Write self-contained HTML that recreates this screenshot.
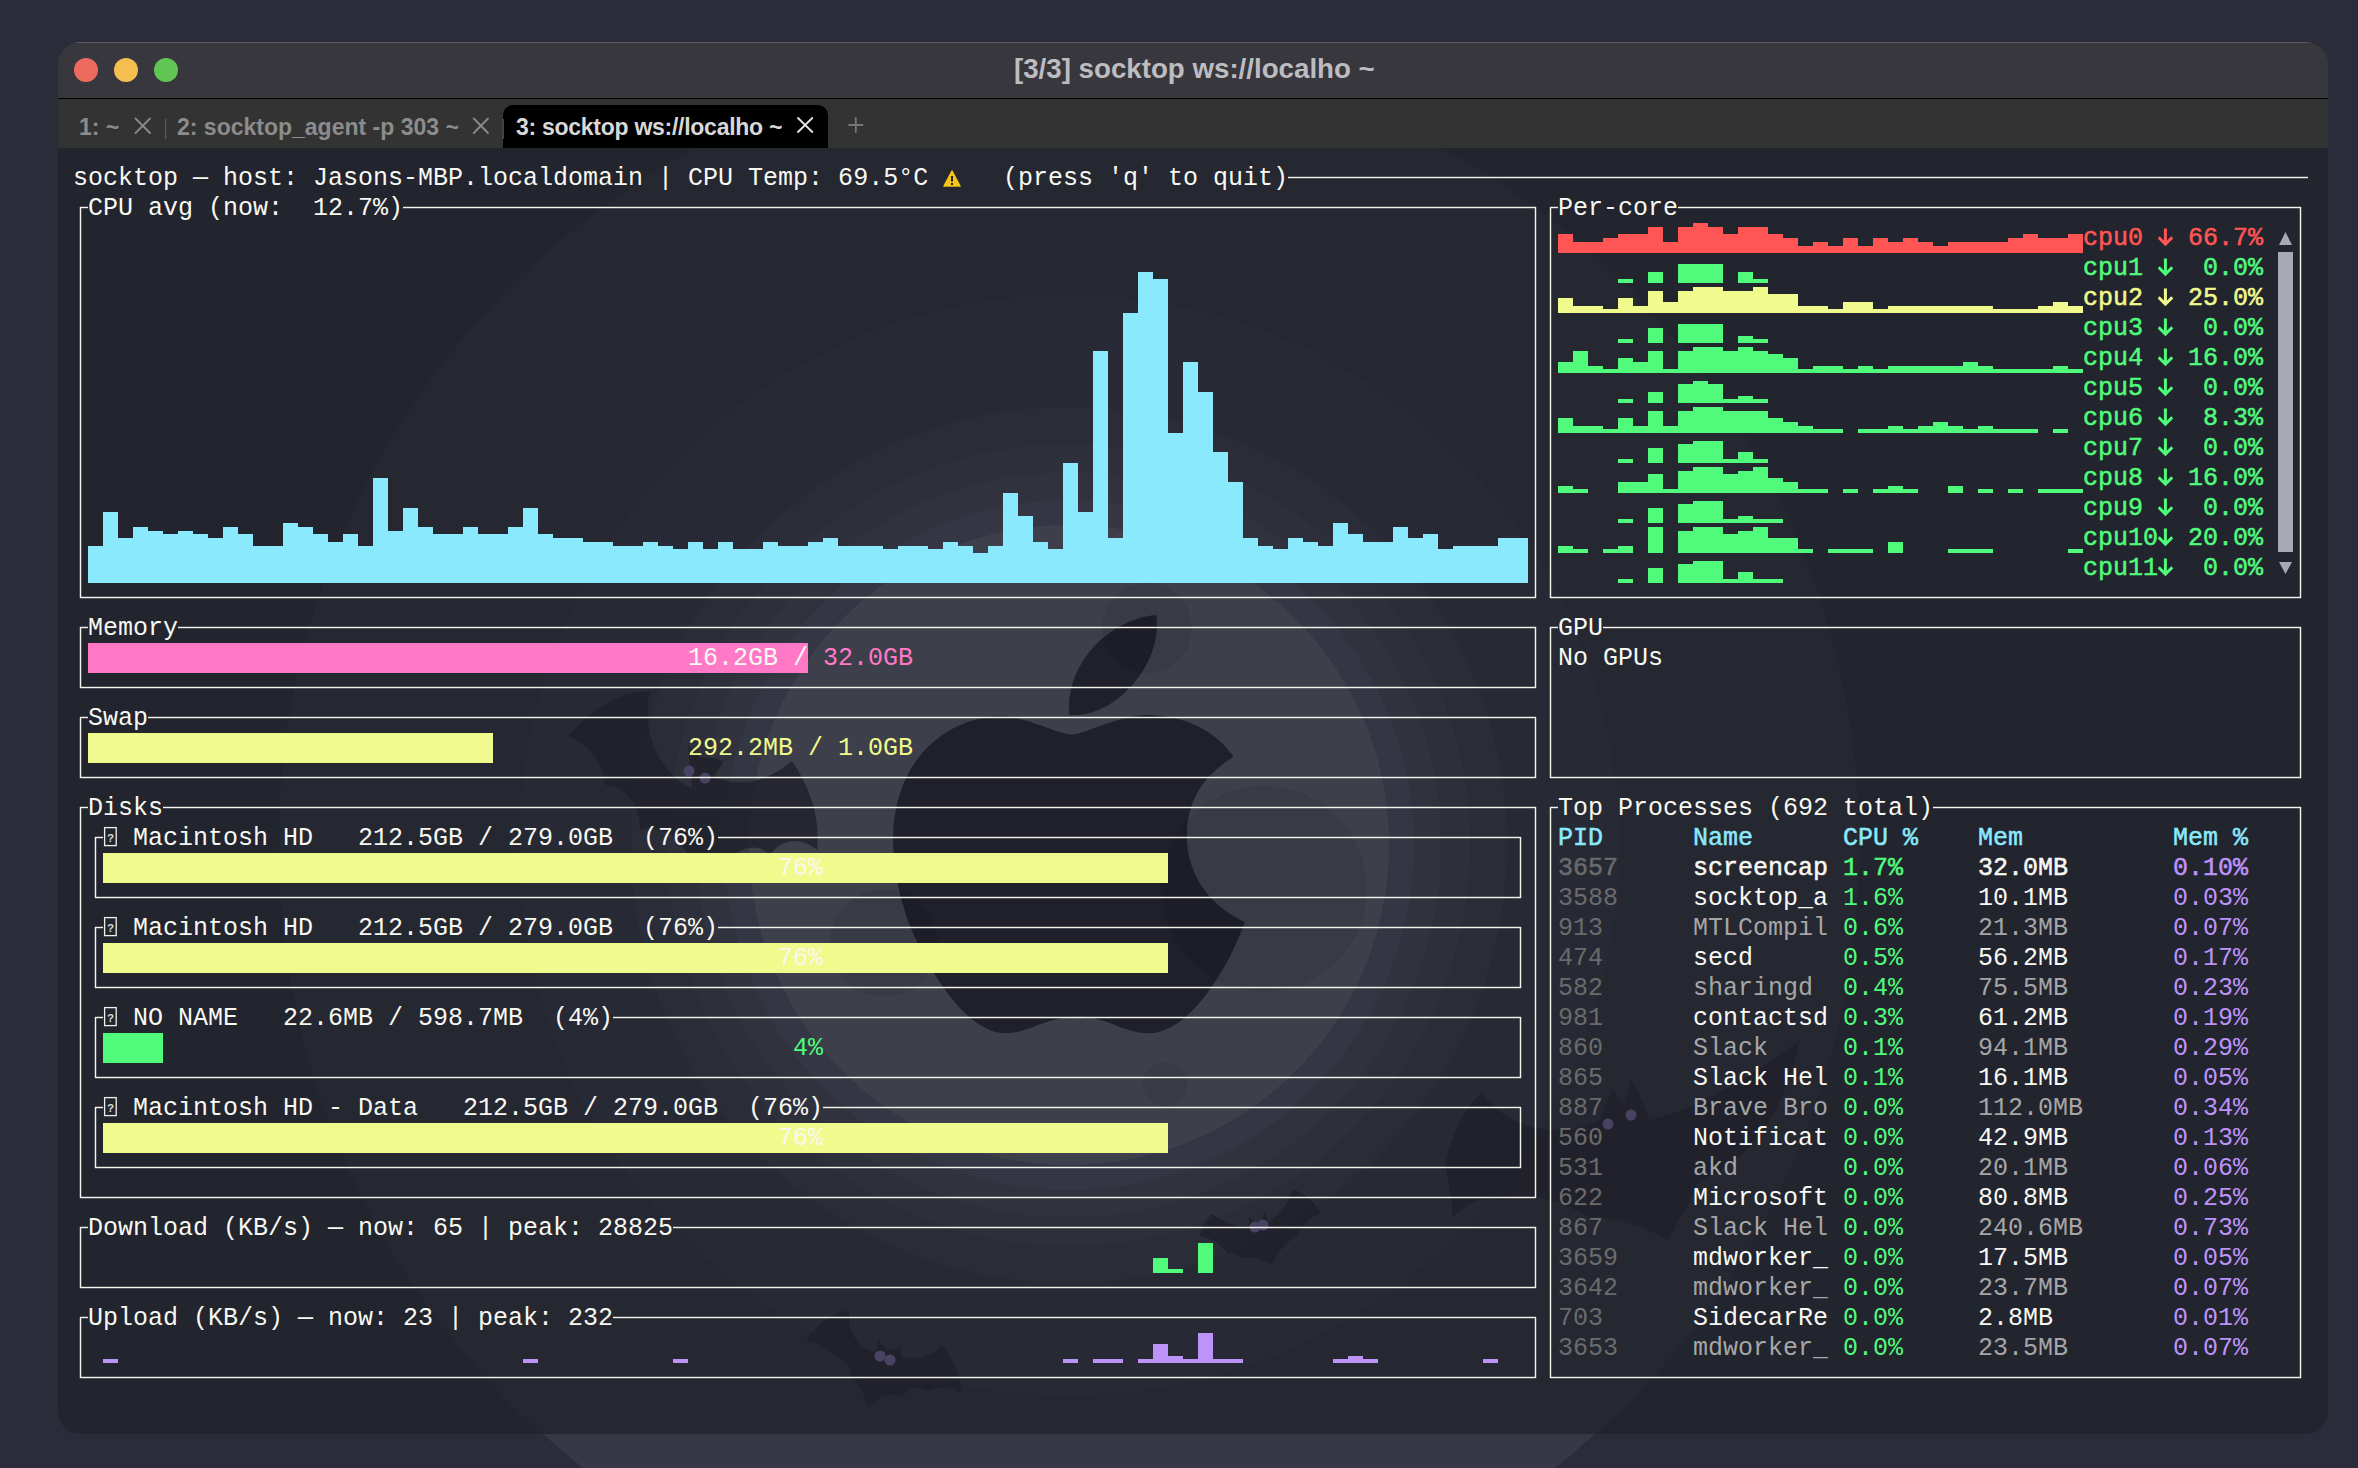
<!DOCTYPE html>
<html><head><meta charset="utf-8">
<style>
html,body{margin:0;padding:0;}
body{width:2358px;height:1468px;position:relative;overflow:hidden;background:#2a2d39;font-family:"Liberation Mono",monospace;}
.wp{position:absolute;left:0;top:0;width:2358px;height:1468px;background:#2a2c39;}
.wpring{position:absolute;left:279px;top:55px;width:1580px;height:1580px;border-radius:50%;background:#363846;}
.win{position:absolute;left:58px;top:42px;width:2270px;height:1392px;border-radius:22px;overflow:hidden;}
.tb{position:absolute;left:0;top:0;width:2270px;height:56px;background:rgba(56,56,61,0.97);border-top:1px solid #5a5a5f;box-sizing:border-box;}
.tbl{position:absolute;left:0;top:56px;width:2270px;height:2px;background:#000;}
.tabs{position:absolute;left:0;top:57px;width:2270px;height:49px;background:#333334;}
.term{position:absolute;left:0;top:106px;width:2270px;height:1286px;background:radial-gradient(circle at 1011px 697px,#3d3f4b 0,#3d3f4b 320px,#343643 320px,#343643 345px,#30323e 345px,#30323e 372px,#2d2f3b 372px,#2d2f3b 401px,#2a2c38 401px,#2a2c38 438px,#272934 438px,#272934 550px,#252731 550px,#252731 790px,#22242e 790px);}
.dot{position:absolute;width:24px;height:24px;border-radius:50%;top:16px;}
.ttl{position:absolute;font-family:"Liberation Sans",sans-serif;font-weight:bold;font-size:27.7px;color:#bdbdc1;white-space:nowrap;}
.tab{position:absolute;font-family:"Liberation Sans",sans-serif;font-weight:bold;font-size:23px;white-space:nowrap;}
.bars{position:absolute;left:0;top:0;shape-rendering:crispEdges;}
.ln{position:absolute;background:#f4f4ee;}
.lh{height:1px;box-shadow:0 1px 0 rgba(244,244,238,0.22),0 -1px 0 rgba(244,244,238,0.22);}
.lv{width:1px;box-shadow:1px 0 0 rgba(244,244,238,0.22),-1px 0 0 rgba(244,244,238,0.22);}
.t{position:absolute;font-size:25px;line-height:30px;height:30px;white-space:pre;transform:translateY(1.6px);}
.b{-webkit-text-stroke:0.5px currentColor;}
</style></head><body>
<div class="wp"></div>
<div class="wpring"></div>
<div class="win">
  <div class="tb"></div>
  <div class="dot" style="left:16px;background:#ed6a5e"></div>
  <div class="dot" style="left:56px;background:#f4bf4f"></div>
  <div class="dot" style="left:96px;background:#61c554"></div>
  <div class="tbl"></div>
  <div class="tabs"></div>
  <div class="term"><svg width="2270" height="1285" style="position:absolute;left:0;top:0"><path d="M318.7 268.7c-.2-36.7 16.4-64.4 50-84.8-18.8-26.9-47.2-41.7-84.7-44.6-35.5-2.8-74.3 20.7-88.5 20.7-15 0-49.4-19.7-76.4-19.7C63.3 141.2 4 184.8 4 273.5q0 39.3 14.4 81.2c12.8 36.7 59 126.7 107.2 125.2 25.2-.6 43-17.9 75.8-17.9 31.8 0 48.3 17.9 76.4 17.9 48.6-.7 90.4-82.5 102.6-119.3-65.2-30.7-61.7-90-61.7-91.9zm-56.6-164.2c27.3-32.4 24.8-61.9 24-72.5-24.1 1.4-52 16.4-67.9 34.9-17.5 19.8-27.8 44.3-25.6 71.9 26.1 2 49.9-11.4 69.5-34.3z" fill="#1f2029" transform="translate(831.3,437.1) scale(0.934)"/><g transform="translate(-58,-148)"><circle cx="1147" cy="628" r="45" fill="#000" opacity="0.07"/><circle cx="1264" cy="889" r="103" fill="#000" opacity="0.07"/><circle cx="884" cy="943" r="54" fill="#000" opacity="0.07"/><circle cx="1165" cy="1084" r="22" fill="#000" opacity="0.07"/><path d="M 568 736 C 600 700 630 690 650 692 C 640 730 660 775 692 788 L 688 745 L 700 757 L 712 758 L 724 761 L 714 776 C 740 790 770 780 792 761 C 812 790 820 820 817 850 C 800 835 780 840 770 855 C 755 840 735 850 725 865 C 715 850 700 850 690 860 C 680 835 660 825 640 830 C 640 805 625 785 605 785 C 605 765 590 745 568 736 Z" fill="#1f2029" opacity="0.8"/><path d="M 806 1342 C 820 1318 840 1310 850 1311 C 845 1330 860 1350 876 1352 L 879 1340 L 886 1349 L 896 1350 L 901 1346 L 901 1356 C 915 1362 935 1356 941 1344 C 955 1360 962 1380 961 1394 C 950 1386 935 1386 928 1391 C 918 1385 908 1388 903 1396 C 890 1392 875 1398 867 1409 C 865 1395 860 1385 852 1378 C 850 1365 840 1355 834 1355 C 828 1346 815 1342 806 1342 Z" fill="#1f2029" opacity="0.8"/><path d="M 1200 1236 C 1203 1225 1208 1216 1213 1214 C 1222 1222 1238 1228 1249 1226 L 1249 1217 L 1256 1223 L 1262 1221 L 1265 1211 L 1268 1222 C 1280 1215 1290 1200 1292 1189 C 1305 1193 1315 1203 1321 1213 C 1308 1218 1300 1228 1296 1238 C 1288 1240 1278 1250 1272 1266 C 1262 1258 1250 1256 1240 1258 C 1235 1252 1232 1250 1228 1254 C 1222 1245 1212 1238 1200 1236 Z" fill="#1f2029" opacity="0.8"/><path d="M 1445 1164 C 1455 1125 1470 1100 1482 1094 C 1510 1130 1560 1140 1600 1120 L 1612 1090 L 1625 1105 L 1631 1078 C 1640 1095 1645 1110 1650 1120 C 1700 1110 1760 1070 1800 1040 C 1790 1090 1760 1160 1700 1180 C 1690 1200 1680 1220 1668 1239 C 1640 1225 1610 1215 1590 1218 C 1560 1200 1530 1190 1500 1200 C 1480 1195 1465 1205 1453 1217 C 1452 1200 1448 1180 1445 1164 Z" fill="#1f2029" opacity="0.8"/></g><circle cx="631" cy="623" r="5.5" fill="#4a4263"/><circle cx="647" cy="630" r="5.5" fill="#4a4263"/><circle cx="1550" cy="976" r="5.5" fill="#4a4263"/><circle cx="1573" cy="967" r="5.5" fill="#4a4263"/><circle cx="1197" cy="1079" r="5.5" fill="#4a4263"/><circle cx="1205" cy="1077" r="5.5" fill="#4a4263"/><circle cx="822" cy="1208" r="5.5" fill="#4a4263"/><circle cx="832" cy="1212" r="5.5" fill="#4a4263"/></svg></div>
</div>
<div class="ttl" style="left:1014px;top:52.7px">[3/3] socktop ws://localho ~</div>
<div style="position:absolute;left:503px;top:105px;width:325px;height:43px;background:#000;border-radius:10px 10px 0 0"></div>
<div class="tab" style="left:79px;top:113.5px;color:#8c8c8c">1: ~</div>
<div class="tab" style="left:177px;top:113.5px;color:#8c8c8c">2: socktop_agent -p 303 ~</div>
<div class="tab" style="left:516px;top:113.5px;color:#d8d8d8;letter-spacing:-0.27px">3: socktop ws://localho ~</div>
<svg style="position:absolute;left:0;top:0" width="900" height="150">
<g stroke-width="1.8" stroke-linecap="round">
<path d="M135.5 118.5 L150 133 M150 118.5 L135.5 133" stroke="#8a8a8a"/>
<path d="M473.8 118.5 L488 133 M488 118.5 L473.8 133" stroke="#8a8a8a"/>
<path d="M798 118 L812.3 132 M812.3 118 L798 132" stroke="#e6e6e6"/>
<path d="M849 125 L862.5 125 M855.8 118 L855.8 132" stroke="#777"/>
</g>
<rect x="165" y="119" width="1.2" height="20" fill="#5c5c5c"/>
<rect x="502.5" y="119" width="1.2" height="20" fill="#5c5c5c"/>
</svg>
<svg class="bars" width="2358" height="1468"><rect x="88" y="545.50" width="15" height="37.50" fill="#8be9fd"/><rect x="103" y="511.75" width="15" height="71.25" fill="#8be9fd"/><rect x="118" y="538.00" width="15" height="45.00" fill="#8be9fd"/><rect x="133" y="526.75" width="15" height="56.25" fill="#8be9fd"/><rect x="148" y="530.50" width="15" height="52.50" fill="#8be9fd"/><rect x="163" y="534.25" width="15" height="48.75" fill="#8be9fd"/><rect x="178" y="530.50" width="15" height="52.50" fill="#8be9fd"/><rect x="193" y="534.25" width="15" height="48.75" fill="#8be9fd"/><rect x="208" y="538.00" width="15" height="45.00" fill="#8be9fd"/><rect x="223" y="526.75" width="15" height="56.25" fill="#8be9fd"/><rect x="238" y="534.25" width="15" height="48.75" fill="#8be9fd"/><rect x="253" y="545.50" width="15" height="37.50" fill="#8be9fd"/><rect x="268" y="545.50" width="15" height="37.50" fill="#8be9fd"/><rect x="283" y="523.00" width="15" height="60.00" fill="#8be9fd"/><rect x="298" y="526.75" width="15" height="56.25" fill="#8be9fd"/><rect x="313" y="534.25" width="15" height="48.75" fill="#8be9fd"/><rect x="328" y="541.75" width="15" height="41.25" fill="#8be9fd"/><rect x="343" y="534.25" width="15" height="48.75" fill="#8be9fd"/><rect x="358" y="545.50" width="15" height="37.50" fill="#8be9fd"/><rect x="373" y="478.00" width="15" height="105.00" fill="#8be9fd"/><rect x="388" y="530.50" width="15" height="52.50" fill="#8be9fd"/><rect x="403" y="508.00" width="15" height="75.00" fill="#8be9fd"/><rect x="418" y="526.75" width="15" height="56.25" fill="#8be9fd"/><rect x="433" y="534.25" width="15" height="48.75" fill="#8be9fd"/><rect x="448" y="534.25" width="15" height="48.75" fill="#8be9fd"/><rect x="463" y="526.75" width="15" height="56.25" fill="#8be9fd"/><rect x="478" y="534.25" width="15" height="48.75" fill="#8be9fd"/><rect x="493" y="534.25" width="15" height="48.75" fill="#8be9fd"/><rect x="508" y="526.75" width="15" height="56.25" fill="#8be9fd"/><rect x="523" y="508.00" width="15" height="75.00" fill="#8be9fd"/><rect x="538" y="534.25" width="15" height="48.75" fill="#8be9fd"/><rect x="553" y="538.00" width="15" height="45.00" fill="#8be9fd"/><rect x="568" y="538.00" width="15" height="45.00" fill="#8be9fd"/><rect x="583" y="541.75" width="15" height="41.25" fill="#8be9fd"/><rect x="598" y="541.75" width="15" height="41.25" fill="#8be9fd"/><rect x="613" y="545.50" width="15" height="37.50" fill="#8be9fd"/><rect x="628" y="545.50" width="15" height="37.50" fill="#8be9fd"/><rect x="643" y="541.75" width="15" height="41.25" fill="#8be9fd"/><rect x="658" y="545.50" width="15" height="37.50" fill="#8be9fd"/><rect x="673" y="549.25" width="15" height="33.75" fill="#8be9fd"/><rect x="688" y="541.75" width="15" height="41.25" fill="#8be9fd"/><rect x="703" y="549.25" width="15" height="33.75" fill="#8be9fd"/><rect x="718" y="541.75" width="15" height="41.25" fill="#8be9fd"/><rect x="733" y="549.25" width="15" height="33.75" fill="#8be9fd"/><rect x="748" y="549.25" width="15" height="33.75" fill="#8be9fd"/><rect x="763" y="541.75" width="15" height="41.25" fill="#8be9fd"/><rect x="778" y="545.50" width="15" height="37.50" fill="#8be9fd"/><rect x="793" y="545.50" width="15" height="37.50" fill="#8be9fd"/><rect x="808" y="541.75" width="15" height="41.25" fill="#8be9fd"/><rect x="823" y="538.00" width="15" height="45.00" fill="#8be9fd"/><rect x="838" y="545.50" width="15" height="37.50" fill="#8be9fd"/><rect x="853" y="545.50" width="15" height="37.50" fill="#8be9fd"/><rect x="868" y="545.50" width="15" height="37.50" fill="#8be9fd"/><rect x="883" y="549.25" width="15" height="33.75" fill="#8be9fd"/><rect x="898" y="545.50" width="15" height="37.50" fill="#8be9fd"/><rect x="913" y="545.50" width="15" height="37.50" fill="#8be9fd"/><rect x="928" y="549.25" width="15" height="33.75" fill="#8be9fd"/><rect x="943" y="541.75" width="15" height="41.25" fill="#8be9fd"/><rect x="958" y="545.50" width="15" height="37.50" fill="#8be9fd"/><rect x="973" y="553.00" width="15" height="30.00" fill="#8be9fd"/><rect x="988" y="545.50" width="15" height="37.50" fill="#8be9fd"/><rect x="1003" y="493.00" width="15" height="90.00" fill="#8be9fd"/><rect x="1018" y="515.50" width="15" height="67.50" fill="#8be9fd"/><rect x="1033" y="541.75" width="15" height="41.25" fill="#8be9fd"/><rect x="1048" y="549.25" width="15" height="33.75" fill="#8be9fd"/><rect x="1063" y="463.00" width="15" height="120.00" fill="#8be9fd"/><rect x="1078" y="511.75" width="15" height="71.25" fill="#8be9fd"/><rect x="1093" y="350.50" width="15" height="232.50" fill="#8be9fd"/><rect x="1108" y="538.00" width="15" height="45.00" fill="#8be9fd"/><rect x="1123" y="313.00" width="15" height="270.00" fill="#8be9fd"/><rect x="1138" y="271.75" width="15" height="311.25" fill="#8be9fd"/><rect x="1153" y="279.25" width="15" height="303.75" fill="#8be9fd"/><rect x="1168" y="433.00" width="15" height="150.00" fill="#8be9fd"/><rect x="1183" y="361.75" width="15" height="221.25" fill="#8be9fd"/><rect x="1198" y="391.75" width="15" height="191.25" fill="#8be9fd"/><rect x="1213" y="451.75" width="15" height="131.25" fill="#8be9fd"/><rect x="1228" y="481.75" width="15" height="101.25" fill="#8be9fd"/><rect x="1243" y="538.00" width="15" height="45.00" fill="#8be9fd"/><rect x="1258" y="545.50" width="15" height="37.50" fill="#8be9fd"/><rect x="1273" y="549.25" width="15" height="33.75" fill="#8be9fd"/><rect x="1288" y="538.00" width="15" height="45.00" fill="#8be9fd"/><rect x="1303" y="541.75" width="15" height="41.25" fill="#8be9fd"/><rect x="1318" y="545.50" width="15" height="37.50" fill="#8be9fd"/><rect x="1333" y="523.00" width="15" height="60.00" fill="#8be9fd"/><rect x="1348" y="534.25" width="15" height="48.75" fill="#8be9fd"/><rect x="1363" y="541.75" width="15" height="41.25" fill="#8be9fd"/><rect x="1378" y="541.75" width="15" height="41.25" fill="#8be9fd"/><rect x="1393" y="526.75" width="15" height="56.25" fill="#8be9fd"/><rect x="1408" y="538.00" width="15" height="45.00" fill="#8be9fd"/><rect x="1423" y="534.25" width="15" height="48.75" fill="#8be9fd"/><rect x="1438" y="549.25" width="15" height="33.75" fill="#8be9fd"/><rect x="1453" y="545.50" width="15" height="37.50" fill="#8be9fd"/><rect x="1468" y="545.50" width="15" height="37.50" fill="#8be9fd"/><rect x="1483" y="545.50" width="15" height="37.50" fill="#8be9fd"/><rect x="1498" y="538.00" width="15" height="45.00" fill="#8be9fd"/><rect x="1513" y="538.00" width="15" height="45.00" fill="#8be9fd"/><rect x="1558" y="234.25" width="15" height="18.75" fill="#ff5555"/><rect x="1573" y="241.75" width="15" height="11.25" fill="#ff5555"/><rect x="1588" y="241.75" width="15" height="11.25" fill="#ff5555"/><rect x="1603" y="238.00" width="15" height="15.00" fill="#ff5555"/><rect x="1618" y="234.25" width="15" height="18.75" fill="#ff5555"/><rect x="1633" y="234.25" width="15" height="18.75" fill="#ff5555"/><rect x="1648" y="226.75" width="15" height="26.25" fill="#ff5555"/><rect x="1663" y="241.75" width="15" height="11.25" fill="#ff5555"/><rect x="1678" y="226.75" width="15" height="26.25" fill="#ff5555"/><rect x="1693" y="223.00" width="15" height="30.00" fill="#ff5555"/><rect x="1708" y="226.75" width="15" height="26.25" fill="#ff5555"/><rect x="1723" y="234.25" width="15" height="18.75" fill="#ff5555"/><rect x="1738" y="226.75" width="15" height="26.25" fill="#ff5555"/><rect x="1753" y="226.75" width="15" height="26.25" fill="#ff5555"/><rect x="1768" y="234.25" width="15" height="18.75" fill="#ff5555"/><rect x="1783" y="238.00" width="15" height="15.00" fill="#ff5555"/><rect x="1798" y="245.50" width="15" height="7.50" fill="#ff5555"/><rect x="1813" y="241.75" width="15" height="11.25" fill="#ff5555"/><rect x="1828" y="245.50" width="15" height="7.50" fill="#ff5555"/><rect x="1843" y="238.00" width="15" height="15.00" fill="#ff5555"/><rect x="1858" y="245.50" width="15" height="7.50" fill="#ff5555"/><rect x="1873" y="238.00" width="15" height="15.00" fill="#ff5555"/><rect x="1888" y="241.75" width="15" height="11.25" fill="#ff5555"/><rect x="1903" y="238.00" width="15" height="15.00" fill="#ff5555"/><rect x="1918" y="241.75" width="15" height="11.25" fill="#ff5555"/><rect x="1933" y="245.50" width="15" height="7.50" fill="#ff5555"/><rect x="1948" y="241.75" width="15" height="11.25" fill="#ff5555"/><rect x="1963" y="241.75" width="15" height="11.25" fill="#ff5555"/><rect x="1978" y="241.75" width="15" height="11.25" fill="#ff5555"/><rect x="1993" y="241.75" width="15" height="11.25" fill="#ff5555"/><rect x="2008" y="238.00" width="15" height="15.00" fill="#ff5555"/><rect x="2023" y="234.25" width="15" height="18.75" fill="#ff5555"/><rect x="2038" y="238.00" width="15" height="15.00" fill="#ff5555"/><rect x="2053" y="238.00" width="15" height="15.00" fill="#ff5555"/><rect x="2068" y="234.25" width="15" height="18.75" fill="#ff5555"/><rect x="1618" y="279.25" width="15" height="3.75" fill="#50fa7b"/><rect x="1648" y="271.75" width="15" height="11.25" fill="#50fa7b"/><rect x="1678" y="264.25" width="15" height="18.75" fill="#50fa7b"/><rect x="1693" y="264.25" width="15" height="18.75" fill="#50fa7b"/><rect x="1708" y="264.25" width="15" height="18.75" fill="#50fa7b"/><rect x="1738" y="271.75" width="15" height="11.25" fill="#50fa7b"/><rect x="1753" y="279.25" width="15" height="3.75" fill="#50fa7b"/><rect x="1558" y="298.00" width="15" height="15.00" fill="#f1fa8c"/><rect x="1573" y="305.50" width="15" height="7.50" fill="#f1fa8c"/><rect x="1588" y="305.50" width="15" height="7.50" fill="#f1fa8c"/><rect x="1603" y="309.25" width="15" height="3.75" fill="#f1fa8c"/><rect x="1618" y="298.00" width="15" height="15.00" fill="#f1fa8c"/><rect x="1633" y="305.50" width="15" height="7.50" fill="#f1fa8c"/><rect x="1648" y="290.50" width="15" height="22.50" fill="#f1fa8c"/><rect x="1663" y="301.75" width="15" height="11.25" fill="#f1fa8c"/><rect x="1678" y="290.50" width="15" height="22.50" fill="#f1fa8c"/><rect x="1693" y="286.75" width="15" height="26.25" fill="#f1fa8c"/><rect x="1708" y="286.75" width="15" height="26.25" fill="#f1fa8c"/><rect x="1723" y="290.50" width="15" height="22.50" fill="#f1fa8c"/><rect x="1738" y="290.50" width="15" height="22.50" fill="#f1fa8c"/><rect x="1753" y="286.75" width="15" height="26.25" fill="#f1fa8c"/><rect x="1768" y="294.25" width="15" height="18.75" fill="#f1fa8c"/><rect x="1783" y="294.25" width="15" height="18.75" fill="#f1fa8c"/><rect x="1798" y="305.50" width="15" height="7.50" fill="#f1fa8c"/><rect x="1813" y="305.50" width="15" height="7.50" fill="#f1fa8c"/><rect x="1828" y="309.25" width="15" height="3.75" fill="#f1fa8c"/><rect x="1843" y="301.75" width="15" height="11.25" fill="#f1fa8c"/><rect x="1858" y="301.75" width="15" height="11.25" fill="#f1fa8c"/><rect x="1873" y="309.25" width="15" height="3.75" fill="#f1fa8c"/><rect x="1888" y="305.50" width="15" height="7.50" fill="#f1fa8c"/><rect x="1903" y="305.50" width="15" height="7.50" fill="#f1fa8c"/><rect x="1918" y="305.50" width="15" height="7.50" fill="#f1fa8c"/><rect x="1933" y="305.50" width="15" height="7.50" fill="#f1fa8c"/><rect x="1948" y="305.50" width="15" height="7.50" fill="#f1fa8c"/><rect x="1963" y="305.50" width="15" height="7.50" fill="#f1fa8c"/><rect x="1978" y="305.50" width="15" height="7.50" fill="#f1fa8c"/><rect x="1993" y="309.25" width="15" height="3.75" fill="#f1fa8c"/><rect x="2008" y="309.25" width="15" height="3.75" fill="#f1fa8c"/><rect x="2023" y="309.25" width="15" height="3.75" fill="#f1fa8c"/><rect x="2038" y="305.50" width="15" height="7.50" fill="#f1fa8c"/><rect x="2053" y="301.75" width="15" height="11.25" fill="#f1fa8c"/><rect x="2068" y="305.50" width="15" height="7.50" fill="#f1fa8c"/><rect x="1618" y="339.25" width="15" height="3.75" fill="#50fa7b"/><rect x="1648" y="328.00" width="15" height="15.00" fill="#50fa7b"/><rect x="1678" y="324.25" width="15" height="18.75" fill="#50fa7b"/><rect x="1693" y="324.25" width="15" height="18.75" fill="#50fa7b"/><rect x="1708" y="324.25" width="15" height="18.75" fill="#50fa7b"/><rect x="1738" y="335.50" width="15" height="7.50" fill="#50fa7b"/><rect x="1753" y="339.25" width="15" height="3.75" fill="#50fa7b"/><rect x="1558" y="361.75" width="15" height="11.25" fill="#50fa7b"/><rect x="1573" y="350.50" width="15" height="22.50" fill="#50fa7b"/><rect x="1588" y="365.50" width="15" height="7.50" fill="#50fa7b"/><rect x="1603" y="369.25" width="15" height="3.75" fill="#50fa7b"/><rect x="1618" y="358.00" width="15" height="15.00" fill="#50fa7b"/><rect x="1633" y="361.75" width="15" height="11.25" fill="#50fa7b"/><rect x="1648" y="350.50" width="15" height="22.50" fill="#50fa7b"/><rect x="1663" y="369.25" width="15" height="3.75" fill="#50fa7b"/><rect x="1678" y="350.50" width="15" height="22.50" fill="#50fa7b"/><rect x="1693" y="346.75" width="15" height="26.25" fill="#50fa7b"/><rect x="1708" y="346.75" width="15" height="26.25" fill="#50fa7b"/><rect x="1723" y="350.50" width="15" height="22.50" fill="#50fa7b"/><rect x="1738" y="346.75" width="15" height="26.25" fill="#50fa7b"/><rect x="1753" y="350.50" width="15" height="22.50" fill="#50fa7b"/><rect x="1768" y="354.25" width="15" height="18.75" fill="#50fa7b"/><rect x="1783" y="358.00" width="15" height="15.00" fill="#50fa7b"/><rect x="1798" y="369.25" width="15" height="3.75" fill="#50fa7b"/><rect x="1813" y="365.50" width="15" height="7.50" fill="#50fa7b"/><rect x="1828" y="365.50" width="15" height="7.50" fill="#50fa7b"/><rect x="1843" y="369.25" width="15" height="3.75" fill="#50fa7b"/><rect x="1858" y="365.50" width="15" height="7.50" fill="#50fa7b"/><rect x="1873" y="369.25" width="15" height="3.75" fill="#50fa7b"/><rect x="1888" y="365.50" width="15" height="7.50" fill="#50fa7b"/><rect x="1903" y="365.50" width="15" height="7.50" fill="#50fa7b"/><rect x="1918" y="365.50" width="15" height="7.50" fill="#50fa7b"/><rect x="1933" y="365.50" width="15" height="7.50" fill="#50fa7b"/><rect x="1948" y="365.50" width="15" height="7.50" fill="#50fa7b"/><rect x="1963" y="361.75" width="15" height="11.25" fill="#50fa7b"/><rect x="1978" y="365.50" width="15" height="7.50" fill="#50fa7b"/><rect x="1993" y="369.25" width="15" height="3.75" fill="#50fa7b"/><rect x="2008" y="369.25" width="15" height="3.75" fill="#50fa7b"/><rect x="2023" y="369.25" width="15" height="3.75" fill="#50fa7b"/><rect x="2038" y="369.25" width="15" height="3.75" fill="#50fa7b"/><rect x="2053" y="365.50" width="15" height="7.50" fill="#50fa7b"/><rect x="2068" y="369.25" width="15" height="3.75" fill="#50fa7b"/><rect x="1618" y="399.25" width="15" height="3.75" fill="#50fa7b"/><rect x="1648" y="391.75" width="15" height="11.25" fill="#50fa7b"/><rect x="1678" y="384.25" width="15" height="18.75" fill="#50fa7b"/><rect x="1693" y="380.50" width="15" height="22.50" fill="#50fa7b"/><rect x="1708" y="384.25" width="15" height="18.75" fill="#50fa7b"/><rect x="1723" y="399.25" width="15" height="3.75" fill="#50fa7b"/><rect x="1738" y="395.50" width="15" height="7.50" fill="#50fa7b"/><rect x="1753" y="399.25" width="15" height="3.75" fill="#50fa7b"/><rect x="1558" y="418.00" width="15" height="15.00" fill="#50fa7b"/><rect x="1573" y="425.50" width="15" height="7.50" fill="#50fa7b"/><rect x="1588" y="425.50" width="15" height="7.50" fill="#50fa7b"/><rect x="1603" y="429.25" width="15" height="3.75" fill="#50fa7b"/><rect x="1618" y="418.00" width="15" height="15.00" fill="#50fa7b"/><rect x="1633" y="425.50" width="15" height="7.50" fill="#50fa7b"/><rect x="1648" y="410.50" width="15" height="22.50" fill="#50fa7b"/><rect x="1663" y="425.50" width="15" height="7.50" fill="#50fa7b"/><rect x="1678" y="410.50" width="15" height="22.50" fill="#50fa7b"/><rect x="1693" y="406.75" width="15" height="26.25" fill="#50fa7b"/><rect x="1708" y="406.75" width="15" height="26.25" fill="#50fa7b"/><rect x="1723" y="410.50" width="15" height="22.50" fill="#50fa7b"/><rect x="1738" y="410.50" width="15" height="22.50" fill="#50fa7b"/><rect x="1753" y="410.50" width="15" height="22.50" fill="#50fa7b"/><rect x="1768" y="418.00" width="15" height="15.00" fill="#50fa7b"/><rect x="1783" y="421.75" width="15" height="11.25" fill="#50fa7b"/><rect x="1798" y="425.50" width="15" height="7.50" fill="#50fa7b"/><rect x="1813" y="429.25" width="15" height="3.75" fill="#50fa7b"/><rect x="1828" y="429.25" width="15" height="3.75" fill="#50fa7b"/><rect x="1858" y="429.25" width="15" height="3.75" fill="#50fa7b"/><rect x="1873" y="429.25" width="15" height="3.75" fill="#50fa7b"/><rect x="1888" y="425.50" width="15" height="7.50" fill="#50fa7b"/><rect x="1903" y="429.25" width="15" height="3.75" fill="#50fa7b"/><rect x="1918" y="425.50" width="15" height="7.50" fill="#50fa7b"/><rect x="1933" y="421.75" width="15" height="11.25" fill="#50fa7b"/><rect x="1948" y="425.50" width="15" height="7.50" fill="#50fa7b"/><rect x="1963" y="429.25" width="15" height="3.75" fill="#50fa7b"/><rect x="1978" y="425.50" width="15" height="7.50" fill="#50fa7b"/><rect x="1993" y="429.25" width="15" height="3.75" fill="#50fa7b"/><rect x="2008" y="429.25" width="15" height="3.75" fill="#50fa7b"/><rect x="2023" y="429.25" width="15" height="3.75" fill="#50fa7b"/><rect x="2053" y="429.25" width="15" height="3.75" fill="#50fa7b"/><rect x="1618" y="459.25" width="15" height="3.75" fill="#50fa7b"/><rect x="1648" y="448.00" width="15" height="15.00" fill="#50fa7b"/><rect x="1678" y="444.25" width="15" height="18.75" fill="#50fa7b"/><rect x="1693" y="440.50" width="15" height="22.50" fill="#50fa7b"/><rect x="1708" y="440.50" width="15" height="22.50" fill="#50fa7b"/><rect x="1723" y="459.25" width="15" height="3.75" fill="#50fa7b"/><rect x="1738" y="451.75" width="15" height="11.25" fill="#50fa7b"/><rect x="1753" y="459.25" width="15" height="3.75" fill="#50fa7b"/><rect x="1558" y="485.50" width="15" height="7.50" fill="#50fa7b"/><rect x="1573" y="489.25" width="15" height="3.75" fill="#50fa7b"/><rect x="1618" y="481.75" width="15" height="11.25" fill="#50fa7b"/><rect x="1633" y="481.75" width="15" height="11.25" fill="#50fa7b"/><rect x="1648" y="474.25" width="15" height="18.75" fill="#50fa7b"/><rect x="1663" y="489.25" width="15" height="3.75" fill="#50fa7b"/><rect x="1678" y="470.50" width="15" height="22.50" fill="#50fa7b"/><rect x="1693" y="466.75" width="15" height="26.25" fill="#50fa7b"/><rect x="1708" y="466.75" width="15" height="26.25" fill="#50fa7b"/><rect x="1723" y="474.25" width="15" height="18.75" fill="#50fa7b"/><rect x="1738" y="470.50" width="15" height="22.50" fill="#50fa7b"/><rect x="1753" y="466.75" width="15" height="26.25" fill="#50fa7b"/><rect x="1768" y="478.00" width="15" height="15.00" fill="#50fa7b"/><rect x="1783" y="481.75" width="15" height="11.25" fill="#50fa7b"/><rect x="1798" y="489.25" width="15" height="3.75" fill="#50fa7b"/><rect x="1813" y="489.25" width="15" height="3.75" fill="#50fa7b"/><rect x="1843" y="489.25" width="15" height="3.75" fill="#50fa7b"/><rect x="1873" y="489.25" width="15" height="3.75" fill="#50fa7b"/><rect x="1888" y="485.50" width="15" height="7.50" fill="#50fa7b"/><rect x="1903" y="489.25" width="15" height="3.75" fill="#50fa7b"/><rect x="1948" y="485.50" width="15" height="7.50" fill="#50fa7b"/><rect x="1978" y="489.25" width="15" height="3.75" fill="#50fa7b"/><rect x="2008" y="489.25" width="15" height="3.75" fill="#50fa7b"/><rect x="2038" y="489.25" width="15" height="3.75" fill="#50fa7b"/><rect x="2053" y="489.25" width="15" height="3.75" fill="#50fa7b"/><rect x="2068" y="489.25" width="15" height="3.75" fill="#50fa7b"/><rect x="1618" y="519.25" width="15" height="3.75" fill="#50fa7b"/><rect x="1648" y="508.00" width="15" height="15.00" fill="#50fa7b"/><rect x="1678" y="504.25" width="15" height="18.75" fill="#50fa7b"/><rect x="1693" y="500.50" width="15" height="22.50" fill="#50fa7b"/><rect x="1708" y="500.50" width="15" height="22.50" fill="#50fa7b"/><rect x="1723" y="519.25" width="15" height="3.75" fill="#50fa7b"/><rect x="1738" y="515.50" width="15" height="7.50" fill="#50fa7b"/><rect x="1753" y="519.25" width="15" height="3.75" fill="#50fa7b"/><rect x="1768" y="519.25" width="15" height="3.75" fill="#50fa7b"/><rect x="1558" y="545.50" width="15" height="7.50" fill="#50fa7b"/><rect x="1573" y="549.25" width="15" height="3.75" fill="#50fa7b"/><rect x="1603" y="549.25" width="15" height="3.75" fill="#50fa7b"/><rect x="1618" y="545.50" width="15" height="7.50" fill="#50fa7b"/><rect x="1648" y="526.75" width="15" height="26.25" fill="#50fa7b"/><rect x="1678" y="530.50" width="15" height="22.50" fill="#50fa7b"/><rect x="1693" y="526.75" width="15" height="26.25" fill="#50fa7b"/><rect x="1708" y="526.75" width="15" height="26.25" fill="#50fa7b"/><rect x="1723" y="534.25" width="15" height="18.75" fill="#50fa7b"/><rect x="1738" y="530.50" width="15" height="22.50" fill="#50fa7b"/><rect x="1753" y="526.75" width="15" height="26.25" fill="#50fa7b"/><rect x="1768" y="538.00" width="15" height="15.00" fill="#50fa7b"/><rect x="1783" y="538.00" width="15" height="15.00" fill="#50fa7b"/><rect x="1798" y="549.25" width="15" height="3.75" fill="#50fa7b"/><rect x="1828" y="549.25" width="15" height="3.75" fill="#50fa7b"/><rect x="1843" y="549.25" width="15" height="3.75" fill="#50fa7b"/><rect x="1858" y="549.25" width="15" height="3.75" fill="#50fa7b"/><rect x="1888" y="541.75" width="15" height="11.25" fill="#50fa7b"/><rect x="1948" y="549.25" width="15" height="3.75" fill="#50fa7b"/><rect x="1963" y="549.25" width="15" height="3.75" fill="#50fa7b"/><rect x="1978" y="549.25" width="15" height="3.75" fill="#50fa7b"/><rect x="2068" y="549.25" width="15" height="3.75" fill="#50fa7b"/><rect x="1618" y="579.25" width="15" height="3.75" fill="#50fa7b"/><rect x="1648" y="568.00" width="15" height="15.00" fill="#50fa7b"/><rect x="1678" y="564.25" width="15" height="18.75" fill="#50fa7b"/><rect x="1693" y="560.50" width="15" height="22.50" fill="#50fa7b"/><rect x="1708" y="560.50" width="15" height="22.50" fill="#50fa7b"/><rect x="1723" y="579.25" width="15" height="3.75" fill="#50fa7b"/><rect x="1738" y="571.75" width="15" height="11.25" fill="#50fa7b"/><rect x="1753" y="579.25" width="15" height="3.75" fill="#50fa7b"/><rect x="1768" y="579.25" width="15" height="3.75" fill="#50fa7b"/><rect x="88" y="643.00" width="720" height="30.00" fill="#ff79c6"/><rect x="88" y="733.00" width="405" height="30.00" fill="#f1fa8c"/><rect x="103" y="853.00" width="1065" height="30.00" fill="#f1fa8c"/><rect x="103" y="943.00" width="1065" height="30.00" fill="#f1fa8c"/><rect x="103" y="1033.00" width="60" height="30.00" fill="#50fa7b"/><rect x="103" y="1123.00" width="1065" height="30.00" fill="#f1fa8c"/><rect x="1153" y="1258.00" width="15" height="15.00" fill="#50fa7b"/><rect x="1168" y="1269.25" width="15" height="3.75" fill="#50fa7b"/><rect x="1198" y="1243.00" width="15" height="30.00" fill="#50fa7b"/><rect x="103" y="1359.25" width="15" height="3.75" fill="#bd93f9"/><rect x="523" y="1359.25" width="15" height="3.75" fill="#bd93f9"/><rect x="673" y="1359.25" width="15" height="3.75" fill="#bd93f9"/><rect x="1063" y="1359.25" width="15" height="3.75" fill="#bd93f9"/><rect x="1093" y="1359.25" width="15" height="3.75" fill="#bd93f9"/><rect x="1108" y="1359.25" width="15" height="3.75" fill="#bd93f9"/><rect x="1138" y="1359.25" width="15" height="3.75" fill="#bd93f9"/><rect x="1153" y="1344.25" width="15" height="18.75" fill="#bd93f9"/><rect x="1168" y="1355.50" width="15" height="7.50" fill="#bd93f9"/><rect x="1183" y="1359.25" width="15" height="3.75" fill="#bd93f9"/><rect x="1198" y="1333.00" width="15" height="30.00" fill="#bd93f9"/><rect x="1213" y="1359.25" width="15" height="3.75" fill="#bd93f9"/><rect x="1228" y="1359.25" width="15" height="3.75" fill="#bd93f9"/><rect x="1333" y="1359.25" width="15" height="3.75" fill="#bd93f9"/><rect x="1348" y="1355.50" width="15" height="7.50" fill="#bd93f9"/><rect x="1363" y="1359.25" width="15" height="3.75" fill="#bd93f9"/><rect x="1483" y="1359.25" width="15" height="3.75" fill="#bd93f9"/></svg>
<div class="t" style="left:73px;top:162px;color:#f8f8f2;">socktop — host: Jasons-MBP.localdomain | CPU Temp: 69.5°C</div>
<div class="t" style="left:1003px;top:162px;color:#f8f8f2;">(press &#x27;q&#x27; to quit)</div>
<div class="ln lh" style="left:1288px;top:177px;width:1020px"></div>
<svg style="position:absolute;left:943px;top:168px" width="18" height="20" viewBox="0 0 18 20"><path d="M9 3 L17 18 L1 18 Z" fill="#f5c518" stroke="#f5c518" stroke-width="1.5" stroke-linejoin="round"/><rect x="8" y="8" width="2" height="5.5" fill="#222"/><rect x="8" y="15" width="2" height="2" fill="#222"/></svg>
<div class="ln lh" style="left:80px;top:207px;width:8px"></div>
<div class="ln lh" style="left:403px;top:207px;width:1133px"></div>
<div class="ln lh" style="left:80px;top:597px;width:1456px"></div>
<div class="ln lv" style="left:80px;top:207px;height:391px"></div>
<div class="ln lv" style="left:1535px;top:207px;height:391px"></div>
<div class="t" style="left:88px;top:192px;color:#f8f8f2;">CPU avg (now:  12.7%)</div>
<div class="ln lh" style="left:1550px;top:207px;width:8px"></div>
<div class="ln lh" style="left:1678px;top:207px;width:623px"></div>
<div class="ln lh" style="left:1550px;top:597px;width:751px"></div>
<div class="ln lv" style="left:1550px;top:207px;height:391px"></div>
<div class="ln lv" style="left:2300px;top:207px;height:391px"></div>
<div class="t" style="left:1558px;top:192px;color:#f8f8f2;">Per-core</div>
<div class="t b" style="left:2083px;top:222px;color:#ff5555;">cpu0</div>
<svg style="position:absolute;left:2158px;top:222px" width="15" height="30"><path d="M7.4 6.5 V22.6 M0.6 15.3 L7.4 22.2 L14.3 15.3" stroke="#ff5555" stroke-width="3" fill="none"/></svg>
<div class="t b" style="left:2188px;top:222px;color:#ff5555;">66.7%</div>
<div class="t b" style="left:2083px;top:252px;color:#50fa7b;">cpu1</div>
<svg style="position:absolute;left:2158px;top:252px" width="15" height="30"><path d="M7.4 6.5 V22.6 M0.6 15.3 L7.4 22.2 L14.3 15.3" stroke="#50fa7b" stroke-width="3" fill="none"/></svg>
<div class="t b" style="left:2188px;top:252px;color:#50fa7b;"> 0.0%</div>
<div class="t b" style="left:2083px;top:282px;color:#f1fa8c;">cpu2</div>
<svg style="position:absolute;left:2158px;top:282px" width="15" height="30"><path d="M7.4 6.5 V22.6 M0.6 15.3 L7.4 22.2 L14.3 15.3" stroke="#f1fa8c" stroke-width="3" fill="none"/></svg>
<div class="t b" style="left:2188px;top:282px;color:#f1fa8c;">25.0%</div>
<div class="t b" style="left:2083px;top:312px;color:#50fa7b;">cpu3</div>
<svg style="position:absolute;left:2158px;top:312px" width="15" height="30"><path d="M7.4 6.5 V22.6 M0.6 15.3 L7.4 22.2 L14.3 15.3" stroke="#50fa7b" stroke-width="3" fill="none"/></svg>
<div class="t b" style="left:2188px;top:312px;color:#50fa7b;"> 0.0%</div>
<div class="t b" style="left:2083px;top:342px;color:#50fa7b;">cpu4</div>
<svg style="position:absolute;left:2158px;top:342px" width="15" height="30"><path d="M7.4 6.5 V22.6 M0.6 15.3 L7.4 22.2 L14.3 15.3" stroke="#50fa7b" stroke-width="3" fill="none"/></svg>
<div class="t b" style="left:2188px;top:342px;color:#50fa7b;">16.0%</div>
<div class="t b" style="left:2083px;top:372px;color:#50fa7b;">cpu5</div>
<svg style="position:absolute;left:2158px;top:372px" width="15" height="30"><path d="M7.4 6.5 V22.6 M0.6 15.3 L7.4 22.2 L14.3 15.3" stroke="#50fa7b" stroke-width="3" fill="none"/></svg>
<div class="t b" style="left:2188px;top:372px;color:#50fa7b;"> 0.0%</div>
<div class="t b" style="left:2083px;top:402px;color:#50fa7b;">cpu6</div>
<svg style="position:absolute;left:2158px;top:402px" width="15" height="30"><path d="M7.4 6.5 V22.6 M0.6 15.3 L7.4 22.2 L14.3 15.3" stroke="#50fa7b" stroke-width="3" fill="none"/></svg>
<div class="t b" style="left:2188px;top:402px;color:#50fa7b;"> 8.3%</div>
<div class="t b" style="left:2083px;top:432px;color:#50fa7b;">cpu7</div>
<svg style="position:absolute;left:2158px;top:432px" width="15" height="30"><path d="M7.4 6.5 V22.6 M0.6 15.3 L7.4 22.2 L14.3 15.3" stroke="#50fa7b" stroke-width="3" fill="none"/></svg>
<div class="t b" style="left:2188px;top:432px;color:#50fa7b;"> 0.0%</div>
<div class="t b" style="left:2083px;top:462px;color:#50fa7b;">cpu8</div>
<svg style="position:absolute;left:2158px;top:462px" width="15" height="30"><path d="M7.4 6.5 V22.6 M0.6 15.3 L7.4 22.2 L14.3 15.3" stroke="#50fa7b" stroke-width="3" fill="none"/></svg>
<div class="t b" style="left:2188px;top:462px;color:#50fa7b;">16.0%</div>
<div class="t b" style="left:2083px;top:492px;color:#50fa7b;">cpu9</div>
<svg style="position:absolute;left:2158px;top:492px" width="15" height="30"><path d="M7.4 6.5 V22.6 M0.6 15.3 L7.4 22.2 L14.3 15.3" stroke="#50fa7b" stroke-width="3" fill="none"/></svg>
<div class="t b" style="left:2188px;top:492px;color:#50fa7b;"> 0.0%</div>
<div class="t b" style="left:2083px;top:522px;color:#50fa7b;">cpu10</div>
<svg style="position:absolute;left:2158px;top:522px" width="15" height="30"><path d="M7.4 6.5 V22.6 M0.6 15.3 L7.4 22.2 L14.3 15.3" stroke="#50fa7b" stroke-width="3" fill="none"/></svg>
<div class="t b" style="left:2188px;top:522px;color:#50fa7b;">20.0%</div>
<div class="t b" style="left:2083px;top:552px;color:#50fa7b;">cpu11</div>
<svg style="position:absolute;left:2158px;top:552px" width="15" height="30"><path d="M7.4 6.5 V22.6 M0.6 15.3 L7.4 22.2 L14.3 15.3" stroke="#50fa7b" stroke-width="3" fill="none"/></svg>
<div class="t b" style="left:2188px;top:552px;color:#50fa7b;"> 0.0%</div>
<svg style="position:absolute;left:2278px;top:222px" width="15" height="360"><path d="M1 23 L7.5 10 L14 23 Z" fill="#a9a9b3"/><rect x="0" y="30" width="15" height="300" fill="#a9a9b3"/><path d="M1 340 L7.5 352 L14 340 Z" fill="#a9a9b3"/></svg>
<div class="ln lh" style="left:80px;top:627px;width:8px"></div>
<div class="ln lh" style="left:178px;top:627px;width:1358px"></div>
<div class="ln lh" style="left:80px;top:687px;width:1456px"></div>
<div class="ln lv" style="left:80px;top:627px;height:61px"></div>
<div class="ln lv" style="left:1535px;top:627px;height:61px"></div>
<div class="t" style="left:88px;top:612px;color:#f8f8f2;">Memory</div>
<div class="t" style="left:688px;top:642px;color:#f8f8f2;">16.2GB /</div>
<div class="t" style="left:823px;top:642px;color:#ff79c6;">32.0GB</div>
<div class="ln lh" style="left:80px;top:717px;width:8px"></div>
<div class="ln lh" style="left:148px;top:717px;width:1388px"></div>
<div class="ln lh" style="left:80px;top:777px;width:1456px"></div>
<div class="ln lv" style="left:80px;top:717px;height:61px"></div>
<div class="ln lv" style="left:1535px;top:717px;height:61px"></div>
<div class="t" style="left:88px;top:702px;color:#f8f8f2;">Swap</div>
<div class="t" style="left:688px;top:732px;color:#f1fa8c;">292.2MB / 1.0GB</div>
<div class="ln lh" style="left:1550px;top:627px;width:8px"></div>
<div class="ln lh" style="left:1603px;top:627px;width:698px"></div>
<div class="ln lh" style="left:1550px;top:777px;width:751px"></div>
<div class="ln lv" style="left:1550px;top:627px;height:151px"></div>
<div class="ln lv" style="left:2300px;top:627px;height:151px"></div>
<div class="t" style="left:1558px;top:612px;color:#f8f8f2;">GPU</div>
<div class="t" style="left:1558px;top:642px;color:#f8f8f2;">No GPUs</div>
<div class="ln lh" style="left:80px;top:807px;width:8px"></div>
<div class="ln lh" style="left:163px;top:807px;width:1373px"></div>
<div class="ln lh" style="left:80px;top:1197px;width:1456px"></div>
<div class="ln lv" style="left:80px;top:807px;height:391px"></div>
<div class="ln lv" style="left:1535px;top:807px;height:391px"></div>
<div class="t" style="left:88px;top:792px;color:#f8f8f2;">Disks</div>
<div class="ln lh" style="left:95px;top:837px;width:8px"></div>
<div class="ln lh" style="left:718px;top:837px;width:803px"></div>
<div class="ln lh" style="left:95px;top:897px;width:1426px"></div>
<div class="ln lv" style="left:95px;top:837px;height:61px"></div>
<div class="ln lv" style="left:1520px;top:837px;height:61px"></div>
<div class="t" style="left:103px;top:822px;color:#f8f8f2;">  Macintosh HD   212.5GB / 279.0GB  (76%)</div>
<svg style="position:absolute;left:103px;top:822px" width="15" height="30"><rect x="1.6" y="5.6" width="11.6" height="18" fill="none" stroke="#f0f0ea" stroke-width="1.3"/><text x="7.4" y="19.6" font-family="Liberation Sans" font-size="11.5" font-weight="bold" fill="#d8d8d2" text-anchor="middle">?</text></svg>
<div class="t" style="left:778px;top:852px;color:#f8f8f2;">76%</div>
<div class="ln lh" style="left:95px;top:927px;width:8px"></div>
<div class="ln lh" style="left:718px;top:927px;width:803px"></div>
<div class="ln lh" style="left:95px;top:987px;width:1426px"></div>
<div class="ln lv" style="left:95px;top:927px;height:61px"></div>
<div class="ln lv" style="left:1520px;top:927px;height:61px"></div>
<div class="t" style="left:103px;top:912px;color:#f8f8f2;">  Macintosh HD   212.5GB / 279.0GB  (76%)</div>
<svg style="position:absolute;left:103px;top:912px" width="15" height="30"><rect x="1.6" y="5.6" width="11.6" height="18" fill="none" stroke="#f0f0ea" stroke-width="1.3"/><text x="7.4" y="19.6" font-family="Liberation Sans" font-size="11.5" font-weight="bold" fill="#d8d8d2" text-anchor="middle">?</text></svg>
<div class="t" style="left:778px;top:942px;color:#f8f8f2;">76%</div>
<div class="ln lh" style="left:95px;top:1017px;width:8px"></div>
<div class="ln lh" style="left:613px;top:1017px;width:908px"></div>
<div class="ln lh" style="left:95px;top:1077px;width:1426px"></div>
<div class="ln lv" style="left:95px;top:1017px;height:61px"></div>
<div class="ln lv" style="left:1520px;top:1017px;height:61px"></div>
<div class="t" style="left:103px;top:1002px;color:#f8f8f2;">  NO NAME   22.6MB / 598.7MB  (4%)</div>
<svg style="position:absolute;left:103px;top:1002px" width="15" height="30"><rect x="1.6" y="5.6" width="11.6" height="18" fill="none" stroke="#f0f0ea" stroke-width="1.3"/><text x="7.4" y="19.6" font-family="Liberation Sans" font-size="11.5" font-weight="bold" fill="#d8d8d2" text-anchor="middle">?</text></svg>
<div class="t" style="left:793px;top:1032px;color:#50fa7b;">4%</div>
<div class="ln lh" style="left:95px;top:1107px;width:8px"></div>
<div class="ln lh" style="left:823px;top:1107px;width:698px"></div>
<div class="ln lh" style="left:95px;top:1167px;width:1426px"></div>
<div class="ln lv" style="left:95px;top:1107px;height:61px"></div>
<div class="ln lv" style="left:1520px;top:1107px;height:61px"></div>
<div class="t" style="left:103px;top:1092px;color:#f8f8f2;">  Macintosh HD - Data   212.5GB / 279.0GB  (76%)</div>
<svg style="position:absolute;left:103px;top:1092px" width="15" height="30"><rect x="1.6" y="5.6" width="11.6" height="18" fill="none" stroke="#f0f0ea" stroke-width="1.3"/><text x="7.4" y="19.6" font-family="Liberation Sans" font-size="11.5" font-weight="bold" fill="#d8d8d2" text-anchor="middle">?</text></svg>
<div class="t" style="left:778px;top:1122px;color:#f8f8f2;">76%</div>
<div class="ln lh" style="left:1550px;top:807px;width:8px"></div>
<div class="ln lh" style="left:1933px;top:807px;width:368px"></div>
<div class="ln lh" style="left:1550px;top:1377px;width:751px"></div>
<div class="ln lv" style="left:1550px;top:807px;height:571px"></div>
<div class="ln lv" style="left:2300px;top:807px;height:571px"></div>
<div class="t" style="left:1558px;top:792px;color:#f8f8f2;">Top Processes (692 total)</div>
<div class="t b" style="left:1558px;top:822px;color:#8be9fd;">PID</div>
<div class="t b" style="left:1693px;top:822px;color:#8be9fd;">Name</div>
<div class="t b" style="left:1843px;top:822px;color:#8be9fd;">CPU %</div>
<div class="t b" style="left:1978px;top:822px;color:#8be9fd;">Mem</div>
<div class="t b" style="left:2173px;top:822px;color:#8be9fd;">Mem %</div>
<div class="t b" style="left:1558px;top:852px;color:#6b6b6b;">3657</div>
<div class="t b" style="left:1693px;top:852px;color:#f8f8f2;">screencap</div>
<div class="t b" style="left:1843px;top:852px;color:#50fa7b;">1.7%</div>
<div class="t b" style="left:1978px;top:852px;color:#f8f8f2;">32.0MB</div>
<div class="t b" style="left:2173px;top:852px;color:#bd93f9;">0.10%</div>
<div class="t" style="left:1558px;top:882px;color:#6b6b6b;">3588</div>
<div class="t" style="left:1693px;top:882px;color:#f8f8f2;">socktop_a</div>
<div class="t" style="left:1843px;top:882px;color:#50fa7b;">1.6%</div>
<div class="t" style="left:1978px;top:882px;color:#f8f8f2;">10.1MB</div>
<div class="t" style="left:2173px;top:882px;color:#bd93f9;">0.03%</div>
<div class="t" style="left:1558px;top:912px;color:#6b6b6b;">913</div>
<div class="t" style="left:1693px;top:912px;color:#a6a6a6;">MTLCompil</div>
<div class="t" style="left:1843px;top:912px;color:#50fa7b;">0.6%</div>
<div class="t" style="left:1978px;top:912px;color:#a6a6a6;">21.3MB</div>
<div class="t" style="left:2173px;top:912px;color:#bd93f9;">0.07%</div>
<div class="t" style="left:1558px;top:942px;color:#6b6b6b;">474</div>
<div class="t" style="left:1693px;top:942px;color:#f8f8f2;">secd</div>
<div class="t" style="left:1843px;top:942px;color:#50fa7b;">0.5%</div>
<div class="t" style="left:1978px;top:942px;color:#f8f8f2;">56.2MB</div>
<div class="t" style="left:2173px;top:942px;color:#bd93f9;">0.17%</div>
<div class="t" style="left:1558px;top:972px;color:#6b6b6b;">582</div>
<div class="t" style="left:1693px;top:972px;color:#a6a6a6;">sharingd</div>
<div class="t" style="left:1843px;top:972px;color:#50fa7b;">0.4%</div>
<div class="t" style="left:1978px;top:972px;color:#a6a6a6;">75.5MB</div>
<div class="t" style="left:2173px;top:972px;color:#bd93f9;">0.23%</div>
<div class="t" style="left:1558px;top:1002px;color:#6b6b6b;">981</div>
<div class="t" style="left:1693px;top:1002px;color:#f8f8f2;">contactsd</div>
<div class="t" style="left:1843px;top:1002px;color:#50fa7b;">0.3%</div>
<div class="t" style="left:1978px;top:1002px;color:#f8f8f2;">61.2MB</div>
<div class="t" style="left:2173px;top:1002px;color:#bd93f9;">0.19%</div>
<div class="t" style="left:1558px;top:1032px;color:#6b6b6b;">860</div>
<div class="t" style="left:1693px;top:1032px;color:#a6a6a6;">Slack</div>
<div class="t" style="left:1843px;top:1032px;color:#50fa7b;">0.1%</div>
<div class="t" style="left:1978px;top:1032px;color:#a6a6a6;">94.1MB</div>
<div class="t" style="left:2173px;top:1032px;color:#bd93f9;">0.29%</div>
<div class="t" style="left:1558px;top:1062px;color:#6b6b6b;">865</div>
<div class="t" style="left:1693px;top:1062px;color:#f8f8f2;">Slack Hel</div>
<div class="t" style="left:1843px;top:1062px;color:#50fa7b;">0.1%</div>
<div class="t" style="left:1978px;top:1062px;color:#f8f8f2;">16.1MB</div>
<div class="t" style="left:2173px;top:1062px;color:#bd93f9;">0.05%</div>
<div class="t" style="left:1558px;top:1092px;color:#6b6b6b;">887</div>
<div class="t" style="left:1693px;top:1092px;color:#a6a6a6;">Brave Bro</div>
<div class="t" style="left:1843px;top:1092px;color:#50fa7b;">0.0%</div>
<div class="t" style="left:1978px;top:1092px;color:#a6a6a6;">112.0MB</div>
<div class="t" style="left:2173px;top:1092px;color:#bd93f9;">0.34%</div>
<div class="t" style="left:1558px;top:1122px;color:#6b6b6b;">560</div>
<div class="t" style="left:1693px;top:1122px;color:#f8f8f2;">Notificat</div>
<div class="t" style="left:1843px;top:1122px;color:#50fa7b;">0.0%</div>
<div class="t" style="left:1978px;top:1122px;color:#f8f8f2;">42.9MB</div>
<div class="t" style="left:2173px;top:1122px;color:#bd93f9;">0.13%</div>
<div class="t" style="left:1558px;top:1152px;color:#6b6b6b;">531</div>
<div class="t" style="left:1693px;top:1152px;color:#a6a6a6;">akd</div>
<div class="t" style="left:1843px;top:1152px;color:#50fa7b;">0.0%</div>
<div class="t" style="left:1978px;top:1152px;color:#a6a6a6;">20.1MB</div>
<div class="t" style="left:2173px;top:1152px;color:#bd93f9;">0.06%</div>
<div class="t" style="left:1558px;top:1182px;color:#6b6b6b;">622</div>
<div class="t" style="left:1693px;top:1182px;color:#f8f8f2;">Microsoft</div>
<div class="t" style="left:1843px;top:1182px;color:#50fa7b;">0.0%</div>
<div class="t" style="left:1978px;top:1182px;color:#f8f8f2;">80.8MB</div>
<div class="t" style="left:2173px;top:1182px;color:#bd93f9;">0.25%</div>
<div class="t" style="left:1558px;top:1212px;color:#6b6b6b;">867</div>
<div class="t" style="left:1693px;top:1212px;color:#a6a6a6;">Slack Hel</div>
<div class="t" style="left:1843px;top:1212px;color:#50fa7b;">0.0%</div>
<div class="t" style="left:1978px;top:1212px;color:#a6a6a6;">240.6MB</div>
<div class="t" style="left:2173px;top:1212px;color:#bd93f9;">0.73%</div>
<div class="t" style="left:1558px;top:1242px;color:#6b6b6b;">3659</div>
<div class="t" style="left:1693px;top:1242px;color:#f8f8f2;">mdworker_</div>
<div class="t" style="left:1843px;top:1242px;color:#50fa7b;">0.0%</div>
<div class="t" style="left:1978px;top:1242px;color:#f8f8f2;">17.5MB</div>
<div class="t" style="left:2173px;top:1242px;color:#bd93f9;">0.05%</div>
<div class="t" style="left:1558px;top:1272px;color:#6b6b6b;">3642</div>
<div class="t" style="left:1693px;top:1272px;color:#a6a6a6;">mdworker_</div>
<div class="t" style="left:1843px;top:1272px;color:#50fa7b;">0.0%</div>
<div class="t" style="left:1978px;top:1272px;color:#a6a6a6;">23.7MB</div>
<div class="t" style="left:2173px;top:1272px;color:#bd93f9;">0.07%</div>
<div class="t" style="left:1558px;top:1302px;color:#6b6b6b;">703</div>
<div class="t" style="left:1693px;top:1302px;color:#f8f8f2;">SidecarRe</div>
<div class="t" style="left:1843px;top:1302px;color:#50fa7b;">0.0%</div>
<div class="t" style="left:1978px;top:1302px;color:#f8f8f2;">2.8MB</div>
<div class="t" style="left:2173px;top:1302px;color:#bd93f9;">0.01%</div>
<div class="t" style="left:1558px;top:1332px;color:#6b6b6b;">3653</div>
<div class="t" style="left:1693px;top:1332px;color:#a6a6a6;">mdworker_</div>
<div class="t" style="left:1843px;top:1332px;color:#50fa7b;">0.0%</div>
<div class="t" style="left:1978px;top:1332px;color:#a6a6a6;">23.5MB</div>
<div class="t" style="left:2173px;top:1332px;color:#bd93f9;">0.07%</div>
<div class="ln lh" style="left:80px;top:1227px;width:8px"></div>
<div class="ln lh" style="left:673px;top:1227px;width:863px"></div>
<div class="ln lh" style="left:80px;top:1287px;width:1456px"></div>
<div class="ln lv" style="left:80px;top:1227px;height:61px"></div>
<div class="ln lv" style="left:1535px;top:1227px;height:61px"></div>
<div class="t" style="left:88px;top:1212px;color:#f8f8f2;">Download (KB/s) — now: 65 | peak: 28825</div>
<div class="ln lh" style="left:80px;top:1317px;width:8px"></div>
<div class="ln lh" style="left:613px;top:1317px;width:923px"></div>
<div class="ln lh" style="left:80px;top:1377px;width:1456px"></div>
<div class="ln lv" style="left:80px;top:1317px;height:61px"></div>
<div class="ln lv" style="left:1535px;top:1317px;height:61px"></div>
<div class="t" style="left:88px;top:1302px;color:#f8f8f2;">Upload (KB/s) — now: 23 | peak: 232</div>
</body></html>
